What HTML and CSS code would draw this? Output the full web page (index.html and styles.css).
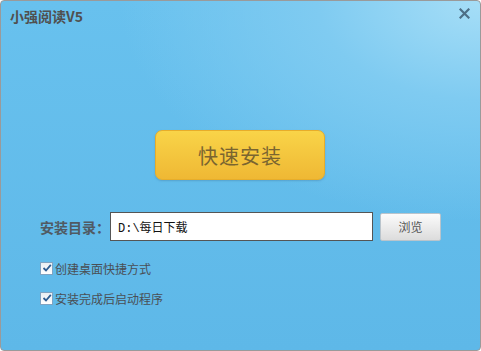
FILE: index.html
```html
<!DOCTYPE html>
<html>
<head>
    <meta charset="utf-8">
    <title>小强阅读V5</title>
    <link rel="stylesheet" href="styles.css">
</head>
<body>
    <div class="window">
        <div class="titlebar">
            <span class="title">小强阅读V5</span>
            <svg class="close" width="11" height="11" viewBox="0 0 11 11">
                <path d="M1.5 1.5 L9.5 9.5 M9.5 1.5 L1.5 9.5" stroke="#4d6f86" stroke-width="2.2" stroke-linecap="square"/>
            </svg>
        </div>
        <div class="main">
            <button class="install-button">快速安装</button>
        </div>
        <div class="dir-row">
            <label for="dir" class="dir-label">安装目录：</label>
            <input type="text" id="dir" class="dir-input" value="D:\每日下载">
            <button class="browse-button">浏览</button>
        </div>
        <label class="check-row">
            <span class="check-box">
                <svg width="10" height="10" viewBox="0 0 10 10"><path d="M1.5 5 L4 7.5 L8.8 1.8" fill="none" stroke="#2d5d93" stroke-width="1.8"/></svg>
            </span>
            <span>创建桌面快捷方式</span>
        </label>
        <label class="check-row">
            <span class="check-box">
                <svg width="10" height="10" viewBox="0 0 10 10"><path d="M1.5 5 L4 7.5 L8.8 1.8" fill="none" stroke="#2d5d93" stroke-width="1.8"/></svg>
            </span>
            <span>安装完成后启动程序</span>
        </label>
    </div>
</body>
</html>
```

FILE: styles.css
```css
html, body {
    margin: 0;
    padding: 0;
}
body {
    font-family: "Noto Sans CJK SC", "Noto Sans", sans-serif;
    color: #555;
}
.window {
    width: 481px;
    height: 351px;
    box-sizing: border-box;
    border: 1px solid #9a9a9a;
    border-radius: 4px;
    overflow: hidden;
    background: radial-gradient(ellipse 360px 220px at 100% 0%, #a6def7 0%, #7fcbf1 45%, rgba(95, 185, 232, 0) 100%),
                linear-gradient(#68c1ee, #5eb8e8);
    display: flex;
    flex-direction: column;
}
.titlebar {
    height: 30px;
    display: flex;
    align-items: flex-start;
    justify-content: space-between;
    padding: 4px 10px 0 9px;
}
.title {
    font-size: 14px;
    font-weight: bold;
    color: #505050;
    line-height: 22px;
}
.close {
    margin-top: 3px;
}
.main {
    display: flex;
    padding-top: 95px;
    padding-left: 154px;
}
.install-button {
    width: 170px;
    height: 50px;
    border: 1px solid #e7ad2a;
    border-radius: 7px;
    background: linear-gradient(#f9d448, #efb834);
    box-shadow: 0 1px 2px rgba(60, 110, 150, 0.35);
    font-family: "Noto Sans CJK SC", sans-serif;
    font-size: 20px;
    color: #7a6530;
    letter-spacing: 1px;
    cursor: pointer;
}
.dir-row {
    display: flex;
    align-items: center;
    margin-top: 32px;
    padding-left: 39px;
    height: 29px;
}
.dir-label {
    font-size: 14px;
    font-weight: bold;
    color: #505a63;
    width: 70px;
    white-space: nowrap;
}
.dir-input {
    width: 263px;
    height: 29px;
    box-sizing: border-box;
    border: 1px solid #555;
    padding: 0 7px;
    font-family: "Liberation Mono", "Noto Sans CJK SC", monospace;
    font-size: 12px;
    color: #111;
    outline: none;
}
.browse-button {
    width: 61px;
    height: 28px;
    margin-left: 7px;
    border: 1px solid #b9c4cc;
    border-radius: 2px;
    background: linear-gradient(#fbfbfb, #dcdcdc);
    font-family: "Noto Sans CJK SC", sans-serif;
    font-size: 12px;
    color: #555;
    cursor: pointer;
}
.check-row {
    display: flex;
    align-items: center;
    padding-left: 39px;
    margin-top: 17px;
    font-size: 12px;
    color: #4a4f55;
    height: 20px;
}
.check-row + .check-row {
    margin-top: 10px;
}
.check-box {
    width: 11px;
    height: 11px;
    border: 1px solid #7fa3c2;
    background: linear-gradient(#e9eef3, #ffffff);
    margin-right: 2px;
    display: flex;
    align-items: center;
    justify-content: center;
}
```
